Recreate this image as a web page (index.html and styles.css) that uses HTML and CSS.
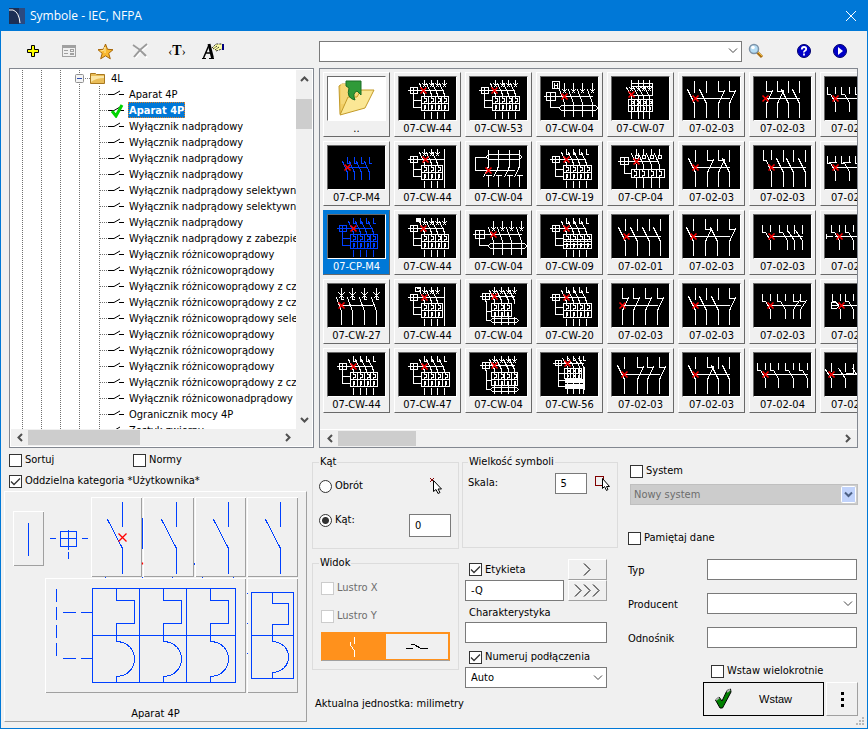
FILE: index.html
```html
<!DOCTYPE html>
<html lang="pl">
<head>
  <meta charset="UTF-8">
  <meta name="viewport" content="width=device-width, initial-scale=1">
  <title>Symbole - IEC, NFPA</title>
  <link rel="stylesheet" href="styles.css">
</head>
<body>
  <div class="window">
    <header class="titlebar">
      <svg class="logo" width="16" height="16" viewBox="0 0 16 16">
        <rect width="16" height="16" fill="#2b4a80"/>
        <rect width="10" height="16" fill="#1c2f55"/>
        <path d="M0 2h4q6 2 7 13" fill="none" stroke="#fff"/>
      </svg>
      <h1>Symbole - IEC, NFPA</h1>
      <button class="close" aria-label="Zamknij">
        <svg width="12" height="12" viewBox="0 0 12 12"><path d="M1 1l10 10M11 1L1 11" stroke="#fff" fill="none"/></svg>
      </button>
    </header>

    <div class="toolbar">
      <div class="tools">
        <button class="tool" aria-label="Dodaj">
          <svg width="14" height="14" viewBox="0 0 14 14"><path d="M5.500 1.500h3v4h4v3h-4v4h-3v-4h-4v-3h4z" fill="#ff0" stroke="#000"/></svg>
        </button>
        <button class="tool" aria-label="Właściwości">
          <svg width="16" height="14" viewBox="0 0 16 14" shape-rendering="crispEdges" fill="none" stroke="#a0a0a0">
            <path d="M1.500 1.500h13v11h-13z"/><path d="M1 3h14" stroke-width="2"/><path d="M3 6.500h4M3 9.500h4M9.500 5.500h3v2h-3zM9.500 9.500h3v1h-3z"/>
          </svg>
        </button>
        <button class="tool" aria-label="Ulubione">
          <svg width="17" height="17" viewBox="0 0 17 17"><path d="M8.500 1l2 5.300 5.500.4-4.300 3.700 1.600 5.400-4.800-3-4.800 3 1.500-5.400L1 6.700l5.500-.4z" fill="#f8b830" stroke="#a66508"/><path d="M8 4L6.500 7.500 3.500 8M8 4v6" stroke="#ffe9a0" fill="none"/></svg>
        </button>
        <button class="tool" aria-label="Usuń">
          <svg width="18" height="16" viewBox="0 0 18 16" fill="none"><path d="M2 3q7 4 13 12M16 2Q9 7 3 15" stroke="#fff" stroke-width="2"/><path d="M1 2q7 4 13 11M15 1Q8 6 2 14" stroke="#9a9a9a" stroke-width="2"/></svg>
        </button>
        <button class="tool tool-text" aria-label="Tekst"><span>‹</span><b>T</b><span>›</span></button>
        <button class="tool" aria-label="Styl tekstu">
          <svg width="24" height="18" viewBox="0 0 24 18">
            <path d="M2.500 16L8 3M4 11h6" stroke="#000" stroke-width="1.500" fill="none"/>
            <path d="M8 2l3.500 14" stroke="#000" stroke-width="3"/>
            <path d="M1 16.500h4M8 16.500h5" stroke="#000"/>
            <path d="M11 6l4-4h6v5l-3 1-3 1z" fill="#ffffa8"/>
            <path d="M11 6l4-4h6M12 7l4-3M14 8l4-3M15 9l3-1 3-1" stroke="#333" stroke-dasharray="2 1" fill="none"/>
            <path d="M22 2v6" stroke="#000080" stroke-width="2"/>
          </svg>
        </button>
      </div>
      <select class="search" aria-label="Szukaj"><option></option></select>
      <button class="tool find" aria-label="Znajdź">
        <svg width="16" height="16" viewBox="0 0 16 16"><path d="M9 9l5 5" stroke="#a86b10" stroke-width="3"/><path d="M10 9l4 4" stroke="#f0c040"/><circle cx="6" cy="6" r="4.500" fill="#b4dcf4" stroke="#7d93a8" stroke-width="1.500"/><circle cx="5" cy="4.500" r="1.800" fill="#fff"/></svg>
      </button>
      <button class="tool" aria-label="Pomoc">
        <svg width="14" height="14" viewBox="0 0 14 14"><circle cx="7" cy="7" r="6.500" fill="#0000c8" stroke="#00006c"/><path d="M4.800 5.500q0-2.500 2.200-2.500t2.200 2q0 1-1.200 1.700T7 8.500M7 9.500v2" stroke="#fff" stroke-width="1.800" fill="none"/></svg>
      </button>
      <button class="tool" aria-label="Odtwórz">
        <svg width="14" height="14" viewBox="0 0 14 14"><circle cx="7" cy="7" r="6.500" fill="#0000c8" stroke="#00006c"/><path d="M5 3l5 4-5 4z" fill="#fff"/></svg>
      </button>
    </div>

    <main class="browser">
      <section class="pane tree">
        <div class="tree-body">
          <ul class="tree-list" id="tree">
            <li class="folder">
              <svg width="32" height="16" viewBox="0 0 32 16">
                <path d="M11 8.500h5" stroke="#808080" stroke-dasharray="1 1"/>
                <rect x="1.500" y="4.500" width="8" height="8" rx="1" fill="#f4f4f4" stroke="#919191"/>
                <path d="M3 8.500h5" stroke="#2b4bb0"/>
                <path d="M16.500 3.500h5l1 1h8v9h-14z" fill="#e9bd58" stroke="#a87820"/>
                <path d="M17 6h13v2q-8 0-13 4z" fill="#fbe6a6"/>
              </svg>
              <span>4L</span>
            </li>
          </ul>
          <div class="vscroll">
            <svg width="9" height="6" viewBox="0 0 9 6"><path d="M1 5l3.500-3.500L8 5" class="arrow"/></svg>
            <div class="vthumb"></div>
            <svg width="9" height="6" viewBox="0 0 9 6"><path d="M1 1l3.500 3.500L8 1" class="arrow"/></svg>
          </div>
        </div>
        <div class="hscroll">
          <svg width="6" height="9" viewBox="0 0 6 9"><path d="M5 1L1.500 4.500 5 8" class="arrow"/></svg>
          <div class="hthumb tree-thumb"></div>
          <svg width="6" height="9" viewBox="0 0 6 9"><path d="M1 1l3.500 3.500L1 8" class="arrow"/></svg>
        </div>
      </section>

      <section class="pane gallery">
        <div class="thumbs" id="thumbs"></div>
        <div class="hscroll gallery-scroll">
          <svg width="6" height="9" viewBox="0 0 6 9"><path d="M5 1L1.500 4.500 5 8" class="arrow"/></svg>
          <div class="hthumb gallery-thumb"></div>
          <svg width="6" height="9" viewBox="0 0 6 9"><path d="M1 1l3.500 3.500L1 8" class="arrow"/></svg>
        </div>
      </section>
    </main>

    <section class="settings">
      <div class="col-preview">
        <div class="filters">
          <label class="check"><input type="checkbox">Sortuj</label>
          <label class="check"><input type="checkbox">Normy</label>
          <label class="check wide"><input type="checkbox" checked>Oddzielna kategoria *Użytkownika*</label>
        </div>
        <figure class="preview">
          <svg id="preview" width="300" height="212" viewBox="5 492 300 212" shape-rendering="crispEdges"></svg>
          <figcaption>Aparat 4P</figcaption>
        </figure>
      </div>

      <div class="col-angle">
        <fieldset class="group angle">
          <legend>Kąt</legend>
          <div class="line">
            <label class="check"><input type="radio" name="angle">Obrót</label>
            <svg width="22" height="18" viewBox="0 0 22 18">
              <path d="M1 1l4 4M5 1L1 5" stroke="#800000"/>
              <path d="M4.500 3.500v11l2.500-2 2 4 2-1-2-3.500h3.500z" fill="#fff" stroke="#000"/>
            </svg>
          </div>
          <div class="line">
            <label class="check"><input type="radio" name="angle" checked>Kąt:</label>
            <input class="field angle-value" type="text" value="0" aria-label="Wartość kąta">
          </div>
        </fieldset>
        <fieldset class="group view">
          <legend>Widok</legend>
          <label class="check off"><input type="checkbox" disabled>Lustro X</label>
          <label class="check off"><input type="checkbox" disabled>Lustro Y</label>
          <div class="toggle">
            <button class="on" aria-label="Pionowo"><svg width="8" height="22" viewBox="0 0 8 22" shape-rendering="crispEdges"><path d="M5.500 1v7M1.500 6v3l4 6v6" stroke="#fff" fill="none"/></svg></button>
            <button aria-label="Poziomo"><svg width="24" height="8" viewBox="0 0 24 8" shape-rendering="crispEdges"><path d="M1 5.500h7M6 1.500h3l7 4h7" stroke="#000" fill="none"/></svg></button>
          </div>
        </fieldset>
        <p class="unit">Aktualna jednostka: milimetry</p>
      </div>

      <div class="col-label">
        <fieldset class="group size">
          <legend>Wielkość symboli</legend>
          <div class="line">
            <label for="scale">Skala:</label>
            <input class="field scale" id="scale" type="text" value="5">
            <svg width="17" height="18" viewBox="0 0 17 18">
              <path d="M1.500 2.500h8v9h-8z" stroke="#800000" fill="none" shape-rendering="crispEdges"/>
              <path d="M8.500 4.500v10l2-2 2 4 1.500-1-1.500-3h3z" fill="#fff" stroke="#000"/>
            </svg>
          </div>
        </fieldset>
        <div class="tag">
          <label class="check"><input type="checkbox" checked>Etykieta</label>
          <button class="bevel" aria-label="Następny"><svg width="9" height="13" viewBox="0 0 9 13"><path d="M1 .5l6 6-6 6" stroke="#000" fill="none"/></svg></button>
          <input class="field" type="text" value="-Q" aria-label="Etykieta">
          <button class="bevel" aria-label="Ostatni"><svg width="27" height="13" viewBox="0 0 27 13"><path d="M1 .5l6 6-6 6M10 .5l6 6-6 6M19 .5l6 6-6 6" stroke="#000" fill="none"/></svg></button>
        </div>
        <div class="stack">
          <label class="caption" for="char">Charakterystyka</label>
          <input class="field" id="char" type="text">
          <label class="check"><input type="checkbox" checked>Numeruj podłączenia</label>
          <select class="field" aria-label="Numeracja"><option>Auto</option></select>
        </div>
      </div>

      <div class="col-data">
        <label class="check"><input type="checkbox">System</label>
        <select class="field system" aria-label="System" disabled><option>Nowy system</option></select>
        <label class="check remember"><input type="checkbox">Pamiętaj dane</label>
        <div class="data-grid">
          <label for="type">Typ</label><input class="field" id="type" type="text">
          <label for="maker">Producent</label><select class="field" id="maker"><option></option></select>
          <label for="ref">Odnośnik</label><input class="field" id="ref" type="text">
        </div>
        <div class="actions">
          <label class="check"><input type="checkbox">Wstaw wielokrotnie</label>
          <div class="buttons">
            <button class="insert">
              <svg width="18" height="22" viewBox="0 0 18 22"><path d="M1.500 12l3.500-3 3 4L13 2.500 16.500 1l.5 3-8.500 16H6z" fill="#008000" stroke="#000"/><path d="M2 12l3-2.500M13 4l3-2.500" stroke="#aaa" stroke-width="2"/></svg>
              <span>Wstaw</span>
            </button>
            <button class="bevel more" aria-label="Więcej"><i></i><i></i><i></i></button>
          </div>
        </div>
      </div>
      <svg class="grip" width="8" height="8" viewBox="0 0 8 8" fill="#b8b8b8"><path d="M6 0h2v2H6zM3 3h2v2H3zM6 3h2v2H6zM0 6h2v2H0zM3 6h2v2H3zM6 6h2v2H6z"/></svg>
    </section>
  </div>
  <script src="script.js"></script>
</body>
</html>
```

FILE: styles.css
```css
* {
  margin: 0;
  padding: 0;
  box-sizing: border-box;
}

body {
  font-family: "DejaVu Sans Condensed", "DejaVu Sans", sans-serif;
  font-size: 11px;
  line-height: 14px;
  color: #000;
  background: #f0f0f0;
}

button, input, select {
  font: inherit;
  color: inherit;
}

button {
  border: none;
  background: none;
}

svg {
  display: block;
  flex: none;
}

.window {
  display: flex;
  flex-direction: column;
  min-height: 100vh;
  border: 1px solid #0078d7;
  border-top: none;
}

.titlebar {
  display: flex;
  align-items: center;
  gap: 5px;
  height: 31px;
  padding: 0 8px;
  background: #0078d7;
  color: #fff;
}

.titlebar h1 {
  flex: 1;
  font: 12px/16px "Open Sans", sans-serif;
}

.close {
  display: flex;
  padding: 2px;
}

/* toolbar */

.toolbar {
  display: flex;
  align-items: center;
  height: 37px;
  padding: 3px 9px 0 14px;
}

.tools {
  display: flex;
  width: 304px;
}

.tool {
  display: flex;
  align-items: center;
  justify-content: center;
  width: 36px;
  height: 24px;
}

.tool-text {
  font: 12px/16px "Liberation Serif", serif;
}

.tool-text b {
  font-size: 14px;
}

.find {
  width: 28px;
  margin-right: 16px;
}

.search {
  flex: 1;
  min-width: 0;
}

.field, .search {
  height: 21px;
  padding: 0 5px;
  border: 1px solid #7a7a7a;
  border-radius: 0;
  background-color: #fff;
  outline: none;
}

select {
  appearance: none;
  background: #fff url("data:image/svg+xml,%3Csvg xmlns='http://www.w3.org/2000/svg' width='10' height='6'%3E%3Cpath d='M1 .5l4 4 4-4' fill='none' stroke='%23444'/%3E%3C/svg%3E") no-repeat right 3px center;
}

/* tree and symbol gallery */

.browser {
  display: flex;
  gap: 5px;
  height: calc(100vh - 349px);
  min-height: 380px;
  padding: 0 9px 0 8px;
}

.pane {
  display: flex;
  flex-direction: column;
  border: 1px solid #828790;
}

.tree {
  flex: none;
  width: 305px;
  padding: 1px;
  background: #fff;
}

.tree-body {
  display: flex;
  flex: 1;
  min-height: 0;
}

.tree-list {
  flex: 1;
  overflow: hidden;
  list-style: none;
  background: url("data:image/svg+xml,%3Csvg xmlns='http://www.w3.org/2000/svg' width='58' height='2'%3E%3Cpath d='M0 0h1v1H0zM19 0h1v1h-1zM38 0h1v1h-1zM57 0h1v1h-1z' fill='%23707070'/%3E%3C/svg%3E") repeat-y 11px 0;
}

.tree-list li {
  display: flex;
  align-items: center;
  height: 16px;
  padding-left: 87px;
  white-space: nowrap;
}

.tree-list .folder {
  padding-left: 63px;
}

.tree-list span {
  height: 16px;
  margin-left: 2px;
  padding: 0 1px;
  line-height: 18px;
}

.tree-list .folder span {
  margin-left: 4px;
}

.tree-list .current span {
  background: #0078d7;
  color: #fff;
  font-weight: bold;
  outline: 1px dotted #e08020;
  outline-offset: -1px;
}

.vscroll {
  display: flex;
  flex-direction: column;
  align-items: center;
  width: 16px;
  padding: 6px 0;
  background: #f0f0f0;
}

.vthumb {
  flex: none;
  width: 16px;
  height: 30px;
  margin: 17px 0 auto;
  background: #cdcdcd;
}

.hscroll {
  display: flex;
  align-items: center;
  height: 17px;
  padding: 0 21px 0 6px;
  background: #f0f0f0;
}

.hthumb {
  height: 15px;
  margin: 0 auto 0 5px;
  background: #cdcdcd;
}

.tree-thumb {
  width: 112px;
}

.gallery-thumb {
  width: 78px;
}

.arrow {
  fill: none;
  stroke: #505050;
  stroke-width: 2;
}

.gallery {
  flex: 1;
  min-width: 0;
}

.thumbs {
  display: grid;
  flex: 1;
  grid-auto-flow: column;
  grid-template-rows: repeat(5, 65px);
  grid-auto-columns: 67px;
  gap: 4px;
  padding: 3px;
  overflow: hidden;
}

.thumb {
  display: flex;
  flex-direction: column;
  align-items: center;
  gap: 1px;
  padding-top: 3px;
  border: 1px solid;
  border-color: #fff #696969 #696969 #fff;
}

.thumb svg {
  border: 1px solid;
  border-color: #696969 #fff #fff #696969;
  background: #000;
}

.thumb .up {
  background: #fff;
}

.thumb.selected {
  border-color: #0078d7 #696969 #696969 #0078d7;
  background: #0078d7;
  color: #fff;
}

.gallery-scroll {
  height: 18px;
  padding: 0 6px 0 7px;
  border-top: 1px solid #fff;
}

/* settings */

.settings {
  position: relative;
  display: flex;
  flex: 1;
  padding: 0 9px 6px 3px;
}

.check {
  display: flex;
  align-items: center;
  gap: 3px;
}

.check input {
  appearance: none;
  flex: none;
  width: 13px;
  height: 13px;
  border: 1px solid #333;
  background: #fff;
}

.check input[type="checkbox"]:checked {
  background: #fff url("data:image/svg+xml,%3Csvg xmlns='http://www.w3.org/2000/svg' width='11' height='11'%3E%3Cpath d='M1 5.500l3 3 6-6' fill='none' stroke='%23333' stroke-width='1.300'/%3E%3C/svg%3E");
}

.check input[type="radio"] {
  border-radius: 50%;
}

.check input[type="radio"]:checked {
  background: radial-gradient(circle, #333 3px, #fff 4px);
}

.check.off {
  color: #6d6d6d;
}

.check.off input {
  border-color: #ccc;
}

.col-preview {
  flex: none;
  width: 303px;
  margin-right: 5px;
}

.filters {
  display: grid;
  grid-template-columns: 124px 1fr;
  row-gap: 7px;
  padding: 5px 0 3px 5px;
}

.filters .wide {
  grid-column: span 2;
}

.preview {
  height: 231px;
  border: 1px solid;
  border-color: #fff #a0a0a0 #a0a0a0 #fff;
}

.preview figcaption {
  padding-top: 3px;
  text-align: center;
}

.group {
  min-width: 0;
  padding: 0 6px;
  border: 1px solid #dcdcdc;
}

.group legend {
  padding: 0 1px;
}

.line {
  display: flex;
  align-items: center;
  justify-content: space-between;
}

.col-angle {
  flex: none;
  width: 147px;
  margin-right: 3px;
  padding-top: 7px;
}

.angle {
  height: 94px;
  padding-right: 7px;
}

.angle .line {
  height: 34px;
}

.angle .line + .line {
  margin-top: 5px;
}

.angle .line + .line .check {
  align-self: flex-start;
  height: 24px;
}

.angle-value {
  width: 42px;
  height: 23px;
}

.view {
  height: 114px;
  margin-top: 7px;
  padding: 4px 8px 0;
}

.view legend {
  margin-left: -2px;
}

.view .check {
  height: 28px;
}

.toggle {
  display: flex;
  height: 29px;
  margin-top: 2px;
  border: 1px solid #ff911c;
  border-bottom-color: #a0a0a0;
}

.toggle button {
  display: flex;
  flex: 1;
  align-items: center;
  justify-content: center;
  border: 1px solid #ff911c;
  border-left: none;
}

.toggle .on {
  background: #ff911c;
}

.unit {
  padding: 27px 0 0 3px;
  white-space: nowrap;
}

.col-label {
  flex: none;
  width: 156px;
  margin-right: 12px;
  padding-top: 7px;
}

.size {
  height: 93px;
  padding: 0 6px 0 5px;
}

.size .line {
  height: 28px;
}

.scale {
  width: 32px;
  margin-left: 49px;
}

.tag {
  display: grid;
  grid-template-columns: 99px 39px;
  grid-template-rows: 21px 21px;
  column-gap: 4px;
  margin: 11px 11px 5px 3px;
}

.tag .check {
  padding-left: 4px;
}

.bevel {
  display: flex;
  align-items: center;
  justify-content: center;
  border: 1px solid;
  border-color: #fff #a0a0a0 #a0a0a0 #fff;
}

.stack {
  display: flex;
  flex-direction: column;
  margin: 0 11px 0 3px;
}

.stack .caption {
  padding: 0 0 2px 4px;
}

.stack .check {
  height: 24px;
  padding: 4px 0 0 4px;
}

.col-data {
  display: flex;
  flex: 1;
  flex-direction: column;
  min-width: 0;
  padding-top: 16px;
}

.col-data .system {
  margin: 6px 0 26px;
  border-color: #bfbfbf;
  color: #6d6d6d;
  opacity: 1;
  padding: 0 3px;
  background: #ccc url("data:image/svg+xml,%3Csvg xmlns='http://www.w3.org/2000/svg' width='15' height='17'%3E%3Crect x='.5' y='.5' width='14' height='16' rx='1' fill='%23c1d3fb' stroke='%23fff'/%3E%3Cpath d='M4 6.500l3.500 3.500 3.500-3.500' fill='none' stroke='%234d6185' stroke-width='2'/%3E%3C/svg%3E") no-repeat right 1px center;
}

.col-data .remember {
  margin-left: -2px;
}

.data-grid {
  display: grid;
  grid-template-columns: 77px 1fr;
  row-gap: 13px;
  align-items: center;
  padding: 14px 1px 16px 0;
}

.data-grid label {
  margin-left: -2px;
  padding-top: 3px;
}

.data-grid .field {
  width: 100%;
}

.actions {
  display: flex;
  flex-direction: column;
  gap: 4px;
  margin-left: 73px;
}

.actions .check {
  padding-left: 8px;
}

.buttons {
  display: flex;
  gap: 2px;
}

.insert {
  display: flex;
  flex: 1;
  align-items: center;
  height: 34px;
  padding: 0 10px;
  border: 1px solid #000;
}

.insert span {
  flex: 1;
  padding-left: 6px;
  font-family: "Liberation Sans", sans-serif;
}

.more {
  flex-direction: column;
  gap: 3px;
  width: 32px;
}

.more i {
  width: 3px;
  height: 3px;
  background: #000;
}

.grip {
  position: absolute;
  right: 3px;
  bottom: 3px;
}
```

FILE: script.js
```js
// ---- tree ----
const cut = "Wyłącznik nadprądowy";
const rcd = "Wyłącznik różnicowoprądowy";
const items = [
  "Aparat 4P", "Aparat 4P", cut, cut, cut, cut,
  cut + " selektywny", cut + " selektywny", cut,
  cut + " z zabezpieczeniem", rcd, rcd,
  rcd + " z członem", rcd + " z członem", rcd + " selektywny",
  rcd, rcd, rcd, rcd + " z członem",
  "Wyłącznik różnicowonadprądowy", "Ogranicznik mocy 4P", "Zestyk zwierny"
];

document.getElementById("tree").insertAdjacentHTML("beforeend", items.map((text, i) => `
  <li class="${i === 1 ? "current" : ""}">
    <svg width="28" height="16" viewBox="0 0 28 16" fill="none">
      <path d="M1.500 0v16M2 8.500h8" stroke="#707070" stroke-dasharray="1 1"/>
      <path d="M10 8.500h6l6-3.500M21 8.500h5" stroke="#000"/>
      ${i === 1 ? '<path d="M14 9l4 5 6-11" stroke="#00d400" stroke-width="3"/>' : ""}
    </svg>
    <span>${text}</span>
  </li>`).join(""));

// ---- gallery symbols, drawn on a 57 x 43 canvas ----

// each pole: [x, type] - o = make, c = break, h = make with side hook, s = straight
function poles(list, t, a, m, b, bar) {
  let d = "";
  list.forEach(([x, type]) => {
    if (type === "c") d += `M${x} ${t}V${a}H${x + 5}M${x + 6} ${a - 1}L${x} ${m}V${b}`;
    else if (type === "h") d += `M${x} ${t}V${a - 1}M${x - 8} ${t}V${a}h3L${x} ${m}V${b}`;
    else if (type === "s") d += `M${x} ${t}V${b}`;
    else d += `M${x} ${t}V${a + 1}M${x - 7} ${a - 2}L${x} ${m}V${b}`;
  });
  return d + `M${list[0][0]} ${bar}H${list[list.length - 1][0]}`;
}

function contacts(xs, t, a, m, b, cross) {
  return xs.map(x => `M${x} ${t}V${a}M${x - 5} ${a - 2}L${x} ${m}V${b}` +
    (cross ? `M${x - 2} ${a - 2}l4 4M${x + 2} ${a - 2}l-4 4` : `M${x - 1} ${a}h3`)).join("");
}

function drive(x, y, w, to) {
  const h = Math.floor(w / 2);
  return `M${x} ${y - h}h${w}v${w - 1}h${-w}zM${x + h} ${y - h - 1}v${w + 2}M${x - 3} ${y}H${to}`;
}

// thermal / magnetic release cells
function release(x, y, w, h, n, rows = 2) {
  const c = w / n, r = Math.round(h / rows);
  let d = `M${x} ${y}h${w}v${h}h${-w}z`;
  for (let i = 0; i < n; i++) {
    const cx = Math.round(x + i * c);
    d += `M${cx} ${y}v${h}M${cx + 3} ${y}v2h2v${r - 4}h-2v2`;
    if (rows > 1) d += `M${cx + 2} ${y + r + 2}h2v${r - 4}h-2M${cx + 3} ${y + r + 1}v${r - 2}`;
  }
  return rows > 1 ? d + `M${x} ${y + r}h${w}` : d;
}

const pill = (x, y, w, h) => `M${x + 2} ${y}h${w - 4}l2 2v${h - 4}l-2 2h${4 - w}l-2-2v${4 - h}z`;
const arm = (x, y, b, to, mid) => `M${x} ${y}V${b}H${to}` + (mid ? `M${x} ${mid}H${to}` : "");

const base = (n, cross, w = 27) =>
  drive(11, 13, 7, 44) + contacts([25, 32, 38, 45].slice(0, n), 2, 8, 17, 19, cross) +
  (n === 3 ? "M45 2V41" : "") + release(22, 19, n === 3 ? 21 : w, 14, n) +
  [25, 32, 38, 45].slice(0, n).map(x => `M${x} 34V41`).join("") + arm(14, 17, 30, 22, 23);

const wide = drive(5, 19, 9, 51) + contacts([23, 32, 41, 51], 5, 14, 26, 39, true) +
  pill(18, 28, 38, 5) + arm(9, 23, 30, 18);

const low = n => drive(12, 12, 7, 44) + contacts([24, 31, 38, 44], 2, 8, 16, 19, true) +
  release(21, 19, n * 6.500, 13, n) + pill(20, 34, 28, 4) + "M24 32V40M31 32V40M38 32V40M44 32V40" + arm(16, 16, 36, 20, 27);

const row = (s, xs, bar = 21) => poles(xs.map((x, i) => [x, s[i]]), 3, 14, 26, 40, bar);
const small = (s, xs) => poles(xs.map((x, i) => [x, s[i]]), 9, 17, 25, 34, 21);

const symbols = [
  ["..", "up"],
  ["07-CP-M4", contacts([19, 26, 33, 41], 10, 17, 26, 33) + "M19 21H39", 19, 21, "blue"],
  ["07-CP-M4", base(4), 25, 13, "blue selected"],
  ["07-CW-27", contacts([13, 24, 36, 48], 3, 15, 27, 40) + "M13 21H44" + [13, 24, 36, 48].map(x => `M${x - 3} 8l6 6M${x + 3} 8l-6 6`).join(""), 13, 21],
  ["07-CW-44", base(4), 25, 13],

  ["07-CW-44", base(4, true), 24, 13],
  ["07-CW-44", base(3, true), 26, 13],
  ["07-CW-44", base(4, true) + "M16 3h5M16 4h5M16 5h5M16 6h5", 24, 13],
  ["07-CW-44", base(3, true) + "M16 3h5v4h-5zM17 4h3", 25, 13],
  ["07-CW-47", base(4, false, 28), 25, 13],

  ["07-CW-53", base(4, true), 24, 13],
  ["07-CW-04", pill(16, 8, 35, 5) + [18, 28, 39, 49].map(x => `M${x} 3V20L${x - 5} 31M${x} 29V40M${x - 3} 29h6`).join("") + "M16 11H5V24H44", 18, 24],
  ["07-CW-04", wide, 23, 19],
  ["07-CW-04", low(3), 24, 12],
  ["07-CW-04", low(4), 24, 12],

  ["07-CW-04", wide + "M11 4h7v7h-7zM13 5v5M16 5v5M13 8h3", 23, 19],
  ["07-CW-19", base(4, false, 28), 25, 13],
  ["07-CW-09", base(4, false, 28) + "M22 24h28M22 29h28", 25, 13],
  ["07-CW-20", base(4, false, 28), 25, 13],
  ["07-CW-56", drive(14, 10, 6, 42) + contacts([26, 32, 38, 42], 2, 7, 13, 40) + release(23, 15, 17, 10, 3) +
    "M43 13V36" + [26, 27, 28, 29, 31, 32, 33, 34, 35].map(y => `M23 ${y}h20`).join("") + arm(17, 13, 33, 23, 20) + "M17 27h6", 26, 10],

  ["07-CW-07", "M18 6h22v12h-22M18 9h22" + contacts([19, 26, 31, 37], 2, 12, 19, 41, true) + release(16, 22, 24, 12, 4), 19, 17],
  ["07-CP-04", drive(8, 15, 8, 46) + contacts([24, 31, 39, 47], 2, 9, 19, 23) + [24, 31, 39, 47].map(x => `M${x - 1} 9h3v3h-3z`).join("") +
    release(19, 23, 33, 8, 4, 1) + "M24 31V41M31 31V41M39 31V41M47 31V41" + arm(12, 18, 27, 19), 24, 15],
  ["07-02-01", row("oooo", [13, 25, 37, 48]), 14, 21],
  ["07-02-03", row("cccc", [10, 21, 33, 45]), 10, 21],
  ["07-02-03", row("occc", [12, 25, 35, 47]), 12, 21],

  ["07-02-03", row("oocc", [11, 23, 35, 46]), 12, 21],
  ["07-02-03", row("occo", [12, 24, 35, 46]), 12, 21],
  ["07-02-03", row("ococ", [10, 22, 34, 46]), 10, 21],
  ["07-02-03", row("oooc", [12, 23, 35, 46]), 12, 21],
  ["07-02-03", row("ocoo", [12, 24, 35, 46]), 12, 21],

  ["07-02-03", row("ccoo", [12, 23, 34, 45]), 11, 21],
  ["07-02-03", row("hooo", [17, 29, 39, 51]), 17, 21],
  ["07-02-03", small("hhoo", [16, 33, 40, 48]), 17, 21],
  ["07-02-03", small("hhcc", [16, 31, 39, 46]), 16, 21],
  ["07-02-04", small("hhhh", [11, 24, 39, 53]), 11, 21],

  ["07-02-03", small("hhhh", [10, 24, 38, 50]), 10, 21],
  ["07-02-03", small("hhhh", [10, 24, 38, 50]) + "M3 16h8M17 16h8", 10, 21],
  ["07-02-03", small("hhhh", [14, 28, 42, 54]) + "M1 18v5M1 21h6M9 21h5", 14, 21],
  ["07-02-03", small("hhhh", [15, 28, 42, 54]) + "M6 18h5l2 2v2l-2 2h-5zM5 21h8", 16, 21],
  ["07-02-03", small("oooo", [6, 20, 34, 48]) + "M20 20h8V10", 6, 21]
];

const folder = `
  <path d="M11 9l3-2h4v24l-6 6z" fill="#f2cf67" stroke="#c39a28"/>
  <path d="M13 7h20v20H13z" fill="#f5d878"/>
  <path d="M12 38l8-18h9l4-7h13l-9 18z" fill="#fbe795" stroke="#c39a28"/>
  <path d="M18 4h15v14l-4-4q-5 2-2 9-9-2-6-12l-3-2z" fill="#2f9a38" stroke="#1b6d24"/>`;

document.getElementById("thumbs").innerHTML = symbols.map(([name, d, rx, ry, cls = ""]) => {
  const color = cls.includes("blue") ? "#0040ff" : "#fff";
  const art = d === "up" ? folder : `
    <g transform="translate(.5 .5)" fill="none">
      <path d="${d}" stroke="${color}" shape-rendering="crispEdges"/>
      <path d="M${rx - 3} ${ry - 3}l6 6M${rx + 3} ${ry - 3}l-6 6" stroke="#f00" stroke-width="1.500"/>
    </g>`;
  return `<button class="thumb ${cls}">
    <svg class="${d === "up" ? "up" : ""}" width="59" height="45" viewBox="0 0 57 43">${art}</svg>
    <span>${name}</span>
  </button>`;
}).join("");

// ---- preview of the selected device ----
function panel(x, y, r, b) {
  return `<path d="M${x} ${b}V${y}H${r}" stroke="#fff"/><path d="M${x} ${b}H${r}V${y}" stroke="#a0a0a0"/>`;
}

function cell(x, y, s, w, h) {
  const mid = y + s;
  return `M${x} ${y}v${h}h${w}V${mid - h}h${-w}V${mid + 6}c${w * 1.33} 1 ${w * 1.33} ${s - 13} 0 ${s - 12}v6`;
}

const poleX = [122, 176, 228, 280];
document.getElementById("preview").innerHTML = `
  <g transform="translate(.5 .5)" fill="none">
    ${panel(13, 511, 43, 565)}
    ${[[91, 141], [143, 193], [195, 245], [247, 297]].map(([l, r]) => panel(l, 497, r, 576)).join("")}
    ${panel(45, 578, 245, 692)}${panel(247, 578, 297, 692)}
    <g stroke="#0040ff">
      <path d="M28 522v33M142 517v31M194 562v2M104 577h1M141 577h1M171 577h1M201 577h1M232 577h1M246 593h1M246 623h1M246 653h1"/>
      <path d="M60 531h16v15h-16zM68 529v20M68 551v7M60 538h16M49 538h6M81 538h6"/>
      <path d="${poleX.map(x => `M${x} 501v25M${x - 15} 519L${x} 548v25`).join("")}"/>
      <path d="M92 588h143v94h-143zM92 635h143M139 588v94M186 588v94${[116, 163, 210].map(x => cell(x, 588, 47, 18, 12)).join("")}"/>
      <path d="M251 592h42v86h-42zM251 635h42${cell(272, 592, 43, 16, 11)}"/>
      <path d="M56 588v13M56 606v13M56 624v13M56 642v13M62 612h13M80 612h12M62 658h13M80 658h12"/>
    </g>
    <path d="M118 533l8 8M126 533l-8 8M142 562v2" stroke="#f00" stroke-width="1.300" shape-rendering="auto"/>
  </g>`;
```
